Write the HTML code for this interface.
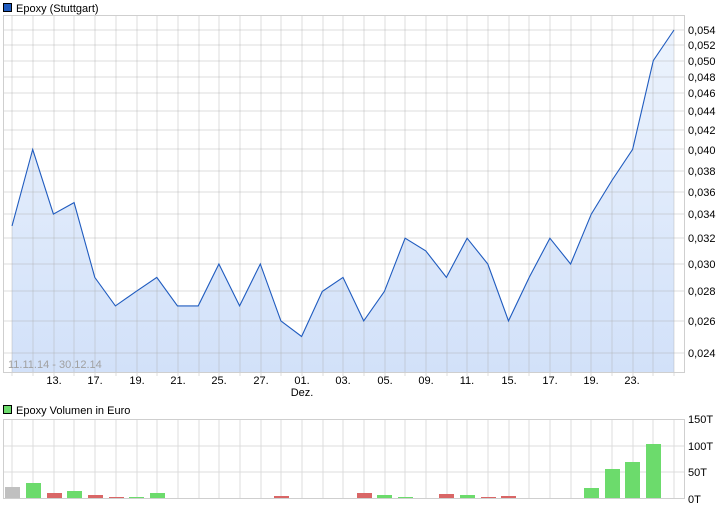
<!DOCTYPE html>
<html><head><meta charset="utf-8"><style>
html,body{margin:0;padding:0;background:#fff;}
svg{display:block;font-family:"Liberation Sans",Verdana,sans-serif;font-size:11px;}
</style></head><body>
<svg width="726" height="508" viewBox="0 0 726 508" xmlns="http://www.w3.org/2000/svg">
<defs><linearGradient id="g" x1="0" y1="0" x2="0" y2="1"><stop offset="0" stop-color="#ecf3fd"/><stop offset="1" stop-color="#d2e1f9"/></linearGradient></defs>
<rect x="3.5" y="3.5" width="8" height="8" fill="#1f5bbf" stroke="#000"/>
<text x="16" y="12" fill="#000">Epoxy (Stuttgart)</text>
<path fill="url(#g)" d="M12 226L32.7 149.4L53.4 214.1L74.1 202.6L94.8 277.4L115.4 305.9L136.1 291.4L156.8 277.4L177.5 305.9L198.2 305.9L218.9 264L239.6 305.9L260.3 264L280.9 320.9L301.6 336.5L322.3 291.4L343 277.4L363.7 320.9L384.4 291.4L405.1 238.2L425.8 250.9L446.4 277.4L467.1 238.2L487.8 264L508.5 320.9L529.2 277.4L549.9 238.2L570.6 264L591.3 214.1L611.9 180.5L632.6 149.4L653.3 60.6L674 30L674 372L12 372Z"/>
<g stroke="rgba(170,170,170,0.4)" stroke-width="1" shape-rendering="crispEdges">
<path d="M3 30H684M3 45H684M3 61H684M3 77H684M3 93H684M3 111H684M3 130H684M3 149H684M3 171H684M3 192H684M3 214H684M3 238H684M3 264H684M3 291H684M3 321H684M3 353H684"/>
<path d="M12 15V376M33 15V376M54 15V376M74 15V376M95 15V376M116 15V376M137 15V376M157 15V376M178 15V376M199 15V376M219 15V376M240 15V376M261 15V376M281 15V376M302 15V376M323 15V376M343 15V376M364 15V376M385 15V376M405 15V376M426 15V376M447 15V376M467 15V376M488 15V376M509 15V376M529 15V376M550 15V376M571 15V376M591 15V376M612 15V376M633 15V376M653 15V376M674 15V376"/>
</g>
<polyline fill="none" stroke="#1f5bbf" stroke-width="1.1" points="12,226 32.7,149.4 53.4,214.1 74.1,202.6 94.8,277.4 115.4,305.9 136.1,291.4 156.8,277.4 177.5,305.9 198.2,305.9 218.9,264 239.6,305.9 260.3,264 280.9,320.9 301.6,336.5 322.3,291.4 343,277.4 363.7,320.9 384.4,291.4 405.1,238.2 425.8,250.9 446.4,277.4 467.1,238.2 487.8,264 508.5,320.9 529.2,277.4 549.9,238.2 570.6,264 591.3,214.1 611.9,180.5 632.6,149.4 653.3,60.6 674,30"/>
<rect x="3.5" y="15.5" width="681" height="357" fill="none" stroke="#cfcfcf" shape-rendering="crispEdges"/>
<text x="8" y="368" fill="#a0a0a0">11.11.14 - 30.12.14</text>
<g fill="#000">
<text x="688" y="34">0,054</text><text x="688" y="49">0,052</text><text x="688" y="65">0,050</text><text x="688" y="81">0,048</text><text x="688" y="97">0,046</text><text x="688" y="115">0,044</text><text x="688" y="134">0,042</text><text x="688" y="154">0,040</text><text x="688" y="175">0,038</text><text x="688" y="196">0,036</text><text x="688" y="218">0,034</text><text x="688" y="242">0,032</text><text x="688" y="268">0,030</text><text x="688" y="295">0,028</text><text x="688" y="325">0,026</text><text x="688" y="357">0,024</text>
</g>
<g fill="#000" text-anchor="middle">
<text x="54" y="384">13.</text><text x="95" y="384">17.</text><text x="137" y="384">19.</text><text x="178" y="384">21.</text><text x="219" y="384">25.</text><text x="261" y="384">27.</text><text x="302" y="384">01.</text><text x="302" y="396">Dez.</text><text x="343" y="384">03.</text><text x="385" y="384">05.</text><text x="426" y="384">09.</text><text x="467" y="384">11.</text><text x="509" y="384">15.</text><text x="550" y="384">17.</text><text x="591" y="384">19.</text><text x="632" y="384">23.</text>
</g>
<rect x="3.5" y="405.5" width="8" height="8" fill="#6cdb6c" stroke="#000"/>
<text x="16" y="414" fill="#000">Epoxy Volumen in Euro</text>
<g stroke="#dcdcdc" shape-rendering="crispEdges">
<path d="M3 446H684M3 472H684"/>
<path d="M12 419V499M33 419V499M54 419V499M74 419V499M95 419V499M116 419V499M137 419V499M157 419V499M178 419V499M199 419V499M219 419V499M240 419V499M261 419V499M281 419V499M302 419V499M323 419V499M343 419V499M364 419V499M385 419V499M405 419V499M426 419V499M447 419V499M467 419V499M488 419V499M509 419V499M529 419V499M550 419V499M571 419V499M591 419V499M612 419V499M633 419V499M653 419V499M674 419V499"/>
</g>
<g shape-rendering="crispEdges">
<rect x="5" y="487" width="15" height="12" fill="#c0c0c0"/>
<rect x="26" y="483" width="15" height="16" fill="#6cdb6c"/>
<rect x="47" y="493" width="15" height="6" fill="#d96666"/>
<rect x="67" y="491" width="15" height="8" fill="#6cdb6c"/>
<rect x="88" y="495" width="15" height="4" fill="#d96666"/>
<rect x="109" y="497" width="15" height="2" fill="#d96666"/>
<rect x="129" y="497" width="15" height="2" fill="#6cdb6c"/>
<rect x="150" y="493" width="15" height="6" fill="#6cdb6c"/>
<rect x="191" y="498" width="15" height="1" fill="#c0c0c0"/>
<rect x="253" y="498" width="15" height="1" fill="#6cdb6c"/>
<rect x="274" y="496" width="15" height="3" fill="#d96666"/>
<rect x="315" y="498" width="15" height="1" fill="#6cdb6c"/>
<rect x="357" y="493" width="15" height="6" fill="#d96666"/>
<rect x="377" y="495" width="15" height="4" fill="#6cdb6c"/>
<rect x="398" y="497" width="15" height="2" fill="#6cdb6c"/>
<rect x="439" y="494" width="15" height="5" fill="#d96666"/>
<rect x="460" y="495" width="15" height="4" fill="#6cdb6c"/>
<rect x="481" y="497" width="15" height="2" fill="#d96666"/>
<rect x="501" y="496" width="15" height="3" fill="#d96666"/>
<rect x="522" y="498" width="15" height="1" fill="#6cdb6c"/>
<rect x="543" y="498" width="15" height="1" fill="#6cdb6c"/>
<rect x="563" y="498" width="15" height="1" fill="#d96666"/>
<rect x="584" y="488" width="15" height="11" fill="#6cdb6c"/>
<rect x="605" y="469" width="15" height="30" fill="#6cdb6c"/>
<rect x="625" y="462" width="15" height="37" fill="#6cdb6c"/>
<rect x="646" y="444" width="15" height="55" fill="#6cdb6c"/>
<rect x="667" y="498" width="15" height="1" fill="#6cdb6c"/>
</g>
<rect x="3.5" y="419.5" width="681" height="79" fill="none" stroke="#cfcfcf" shape-rendering="crispEdges"/>
<g fill="#000">
<text x="688" y="423">150T</text><text x="688" y="450">100T</text><text x="688" y="476">50T</text><text x="688" y="503">0T</text>
</g>
</svg>
</body></html>
